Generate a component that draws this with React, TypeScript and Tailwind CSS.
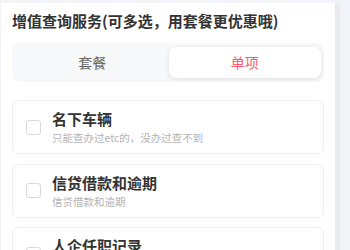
import { useState } from "react";

type Item = { id: string; title: string; desc: string };

const items: Item[] = [
  { id: "car", title: "名下车辆", desc: "只能查办过etc的，没办过查不到" },
  { id: "loan", title: "信贷借款和逾期", desc: "信贷借款和逾期" },
  { id: "job", title: "人企任职记录", desc: "人企任职记录" },
];

export default function App() {
  const [tab, setTab] = useState<"pkg" | "single">("single");
  const [checked, setChecked] = useState<Record<string, boolean>>({});

  return (
    <div
      className="flex h-[250px] w-[350px] overflow-hidden bg-[#f3f4f8] pt-[3px] pl-[1px]"
      style={{ fontFamily: '"Noto Sans CJK SC", "Noto Sans", sans-serif' }}
    >
      <div className="w-[334px] shrink-0 bg-white px-[11px] pt-[7px]">
        <h2 className="text-[15px] leading-[22px] font-bold text-[#333]">
          增值查询服务(可多选，用套餐更优惠哦)
        </h2>

        {/* tabs */}
        <div className="mt-[11px] grid h-[39px] grid-cols-2 rounded-[8px] bg-[#f7f8fa] p-[4px] pr-[3px]">
          <button
            type="button"
            onClick={() => setTab("pkg")}
            className={`rounded-[7px] text-[14px] ${
              tab === "pkg" ? "bg-white text-[#fa5a70] shadow-[0_1px_5px_rgba(0,0,0,0.1)]" : "text-[#666]"
            }`}
          >
            套餐
          </button>
          <button
            type="button"
            onClick={() => setTab("single")}
            className={`rounded-[7px] text-[14px] ${
              tab === "single" ? "bg-white text-[#fa5a70] shadow-[0_1px_5px_rgba(0,0,0,0.1)]" : "text-[#666]"
            }`}
          >
            单项
          </button>
        </div>

        {/* items */}
        <div className="mt-[18px] flex flex-col gap-[9.5px]">
          {items.map((it) => (
            <label
              key={it.id}
              className="flex h-[54px] items-center gap-[11px] rounded-[6px] border border-[#efefef] pl-[13px]"
            >
              <input
                type="checkbox"
                className="sr-only"
                checked={!!checked[it.id]}
                onChange={(e) => setChecked({ ...checked, [it.id]: e.target.checked })}
              />
              <span
                className={`h-[15px] w-[15px] shrink-0 rounded-[3px] border ${
                  checked[it.id] ? "border-[#fa5a70] bg-[#fa5a70]" : "border-[#d9d9d9] bg-white"
                }`}
              />
              <div className="flex flex-col">
                <span className="text-[15px] leading-[22px] font-bold text-[#333]">{it.title}</span>
                <span className="text-[10.5px] leading-[16px] text-[#b3b3b3]">{it.desc}</span>
              </div>
            </label>
          ))}
        </div>
      </div>
      <div className="w-[5px] shrink-0 bg-[#e9ebf1]" />
    </div>
  );
}
